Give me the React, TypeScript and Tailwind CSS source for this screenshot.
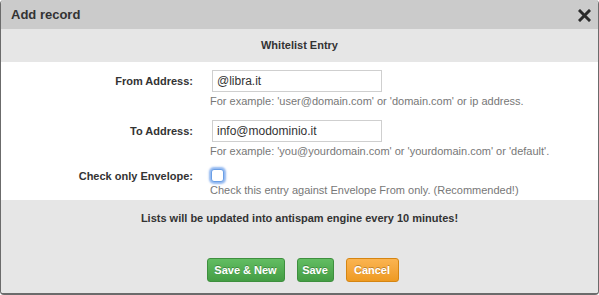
import React from "react";

const font = { fontFamily: '"Liberation Sans", Arial, Helvetica, sans-serif' };

function Row({ label, children, helper }: { label: string; children: React.ReactNode; helper: string }) {
  return (
    <div className="flex">
      <div className="w-[193px] shrink-0 pr-[1px] text-right text-[11px] font-bold text-[#333] leading-[22px]">{label}</div>
      <div className="ml-[16px] flex flex-col">
        {children}
        <div className="mt-[2px] text-[11px] leading-[14px] text-[#777]">{helper}</div>
      </div>
    </div>
  );
}

export default function App() {
  return (
    <div style={font} className="w-[599px] h-[295px] overflow-hidden bg-white">
      <div className="flex h-full flex-col overflow-hidden rounded-[4px] border-l border-r border-b-2 border-[#6b6b6b]">
        <div className="flex h-[29px] shrink-0 items-center justify-between bg-[#cbcbcb] pl-[10px] pr-[7px]">
          <span className="text-[13px] font-bold text-[#333]">Add record</span>
          <svg width="13" height="13" viewBox="0 0 13 13" className="mt-[1px]">
            <path d="M2 2 L11 11 M11 2 L2 11" stroke="#2b2b2b" strokeWidth="3" strokeLinecap="square" />
          </svg>
        </div>
        <div className="flex h-[33px] shrink-0 items-center justify-center bg-[#e6e6e6] text-[11px] font-bold text-[#333]">
          Whitelist Entry
        </div>
        <div className="flex h-[138px] shrink-0 flex-col bg-white pt-[8px]">
          <Row label="From Address:" helper="For example: 'user@domain.com' or 'domain.com' or ip address.">
            <div className="ml-[2px] flex h-[22px] w-[170px] items-center border border-[#cfcfcf] px-[4px] text-[12px] text-[#333]">
              @libra.it
            </div>
          </Row>
          <div className="mt-[12px]">
            <Row label="To Address:" helper="For example: 'you@yourdomain.com' or 'yourdomain.com' or 'default'.">
              <div className="ml-[2px] flex h-[22px] w-[170px] items-center border border-[#cfcfcf] px-[4px] text-[12px] text-[#333]">
                info@modominio.it
              </div>
            </Row>
          </div>
          <div className="mt-[11px] flex">
            <div className="w-[193px] shrink-0 pr-[1px] pt-[1px] text-right text-[11px] font-bold text-[#333] leading-[13px]">
              Check only Envelope:
            </div>
            <div className="ml-[16px] flex flex-col">
              <div className="ml-[1px] h-[13px] w-[13px] rounded-[3px] border border-[#6a9fe6] bg-white shadow-[0_0_2px_2px_rgba(110,160,235,0.75)]" />
              <div className="mt-[1px] text-[11px] leading-[14px] text-[#777]">
                Check this entry against Envelope From only. (Recommended!)
              </div>
            </div>
          </div>
        </div>
        <div className="flex flex-1 flex-col items-center bg-[#e6e6e6] pt-[11px]">
          <div className="text-[11px] font-bold leading-[14px] text-[#333]">
            Lists will be updated into antispam engine every 10 minutes!
          </div>
          <div className="mt-[33px] ml-[6px] flex gap-[12px]">
            <button className="h-[24px] w-[78px] rounded-[3px] border border-[#3e8f3e] bg-gradient-to-b from-[#62bd62] to-[#449d44] text-[11px] font-bold text-white [text-shadow:0_-1px_0_rgba(0,0,0,0.25)]">
              Save &amp; New
            </button>
            <button className="h-[24px] w-[37px] rounded-[3px] border border-[#3e8f3e] bg-gradient-to-b from-[#62bd62] to-[#449d44] text-[11px] font-bold text-white [text-shadow:0_-1px_0_rgba(0,0,0,0.25)]">
              Save
            </button>
            <button className="h-[24px] w-[53px] rounded-[3px] border border-[#d58512] bg-gradient-to-b from-[#fbb450] to-[#ee9a20] text-[11px] font-bold text-white [text-shadow:0_-1px_0_rgba(0,0,0,0.25)]">
              Cancel
            </button>
          </div>
        </div>
      </div>
    </div>
  );
}
